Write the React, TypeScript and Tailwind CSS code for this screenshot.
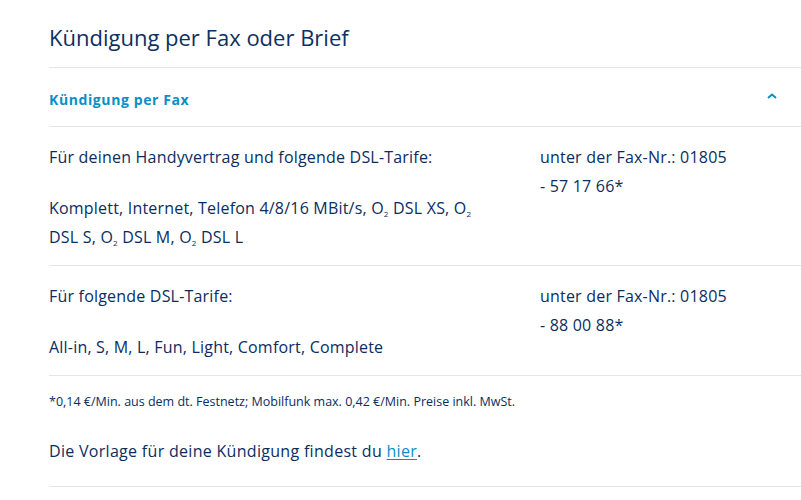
import React from 'react';

const O2 = () => (
  <>
    O<span className="align-[-3px] text-[8px] leading-none">2</span>
  </>
);

type Row = { label: string; tariffs: React.ReactNode; fax: string; num: string };

const rows: Row[] = [
  {
    label: 'Für deinen Handyvertrag und folgende DSL-Tarife:',
    tariffs: (
      <>
        Komplett, Internet, Telefon 4/8/16 MBit/s, <O2 /> DSL XS, <O2 /> DSL S, <O2 /> DSL M, <O2 /> DSL L
      </>
    ),
    fax: 'unter der Fax-Nr.: 01805',
    num: '- 57 17 66*',
  },
  {
    label: 'Für folgende DSL-Tarife:',
    tariffs: 'All-in, S, M, L, Fun, Light, Comfort, Complete',
    fax: 'unter der Fax-Nr.: 01805',
    num: '- 88 00 88*',
  },
];

export default function App() {
  return (
    <div
      className="min-h-screen bg-white pl-[49px] text-[#0b2d5e]"
      style={{ fontFamily: '"Open Sans", "Noto Sans", sans-serif' }}
    >
      <h1 className="pt-[23px] pb-[15px] text-[22px] leading-[29px] text-[#0d2f63]">
        Kündigung per Fax oder Brief
      </h1>

      <div className="border-t border-[#e3e5e8]">
        <div className="flex h-[58px] items-center justify-between pr-[24px] pt-[5px]">
          <h2 className="text-[14px] tracking-[0.6px] font-bold text-[#0a8ec6]">Kündigung per Fax</h2>
          <svg width="10" height="6" viewBox="0 0 10 6" className="mt-[-8px]">
            <path d="M1 5 L5 1.5 L9 5" fill="none" stroke="#0a8ec6" strokeWidth="2" />
          </svg>
        </div>

        {rows.map((r, i) => (
          <div
            key={i}
            className="grid grid-cols-[491px_1fr] border-t border-[#e3e5e8] pt-[16px] pb-[13px] text-[16px] tracking-[0.2px] leading-[29px]"
          >
            <div className="pr-[50px]">
              <p className="mb-[22px]">{r.label}</p>
              <p>{r.tariffs}</p>
            </div>
            <div className="w-[210px]">
              <p>{r.fax}</p>
              <p>{r.num}</p>
            </div>
          </div>
        ))}

        <div className="border-t border-[#e3e5e8] pt-[17px]">
          <p className="text-[12.5px] leading-[18px]">
            *0,14 €/Min. aus dem dt. Festnetz; Mobilfunk max. 0,42 €/Min. Preise inkl. MwSt.
          </p>
          <p className="pt-[26px] pb-[20px] text-[16px] tracking-[0.3px] leading-[29px]">
            Die Vorlage für deine Kündigung findest du{' '}
            <a href="#" className="text-[#0a8ec6] underline underline-offset-2">
              hier
            </a>
            .
          </p>
        </div>
        <div className="border-t border-[#e3e5e8]" />
      </div>
    </div>
  );
}
